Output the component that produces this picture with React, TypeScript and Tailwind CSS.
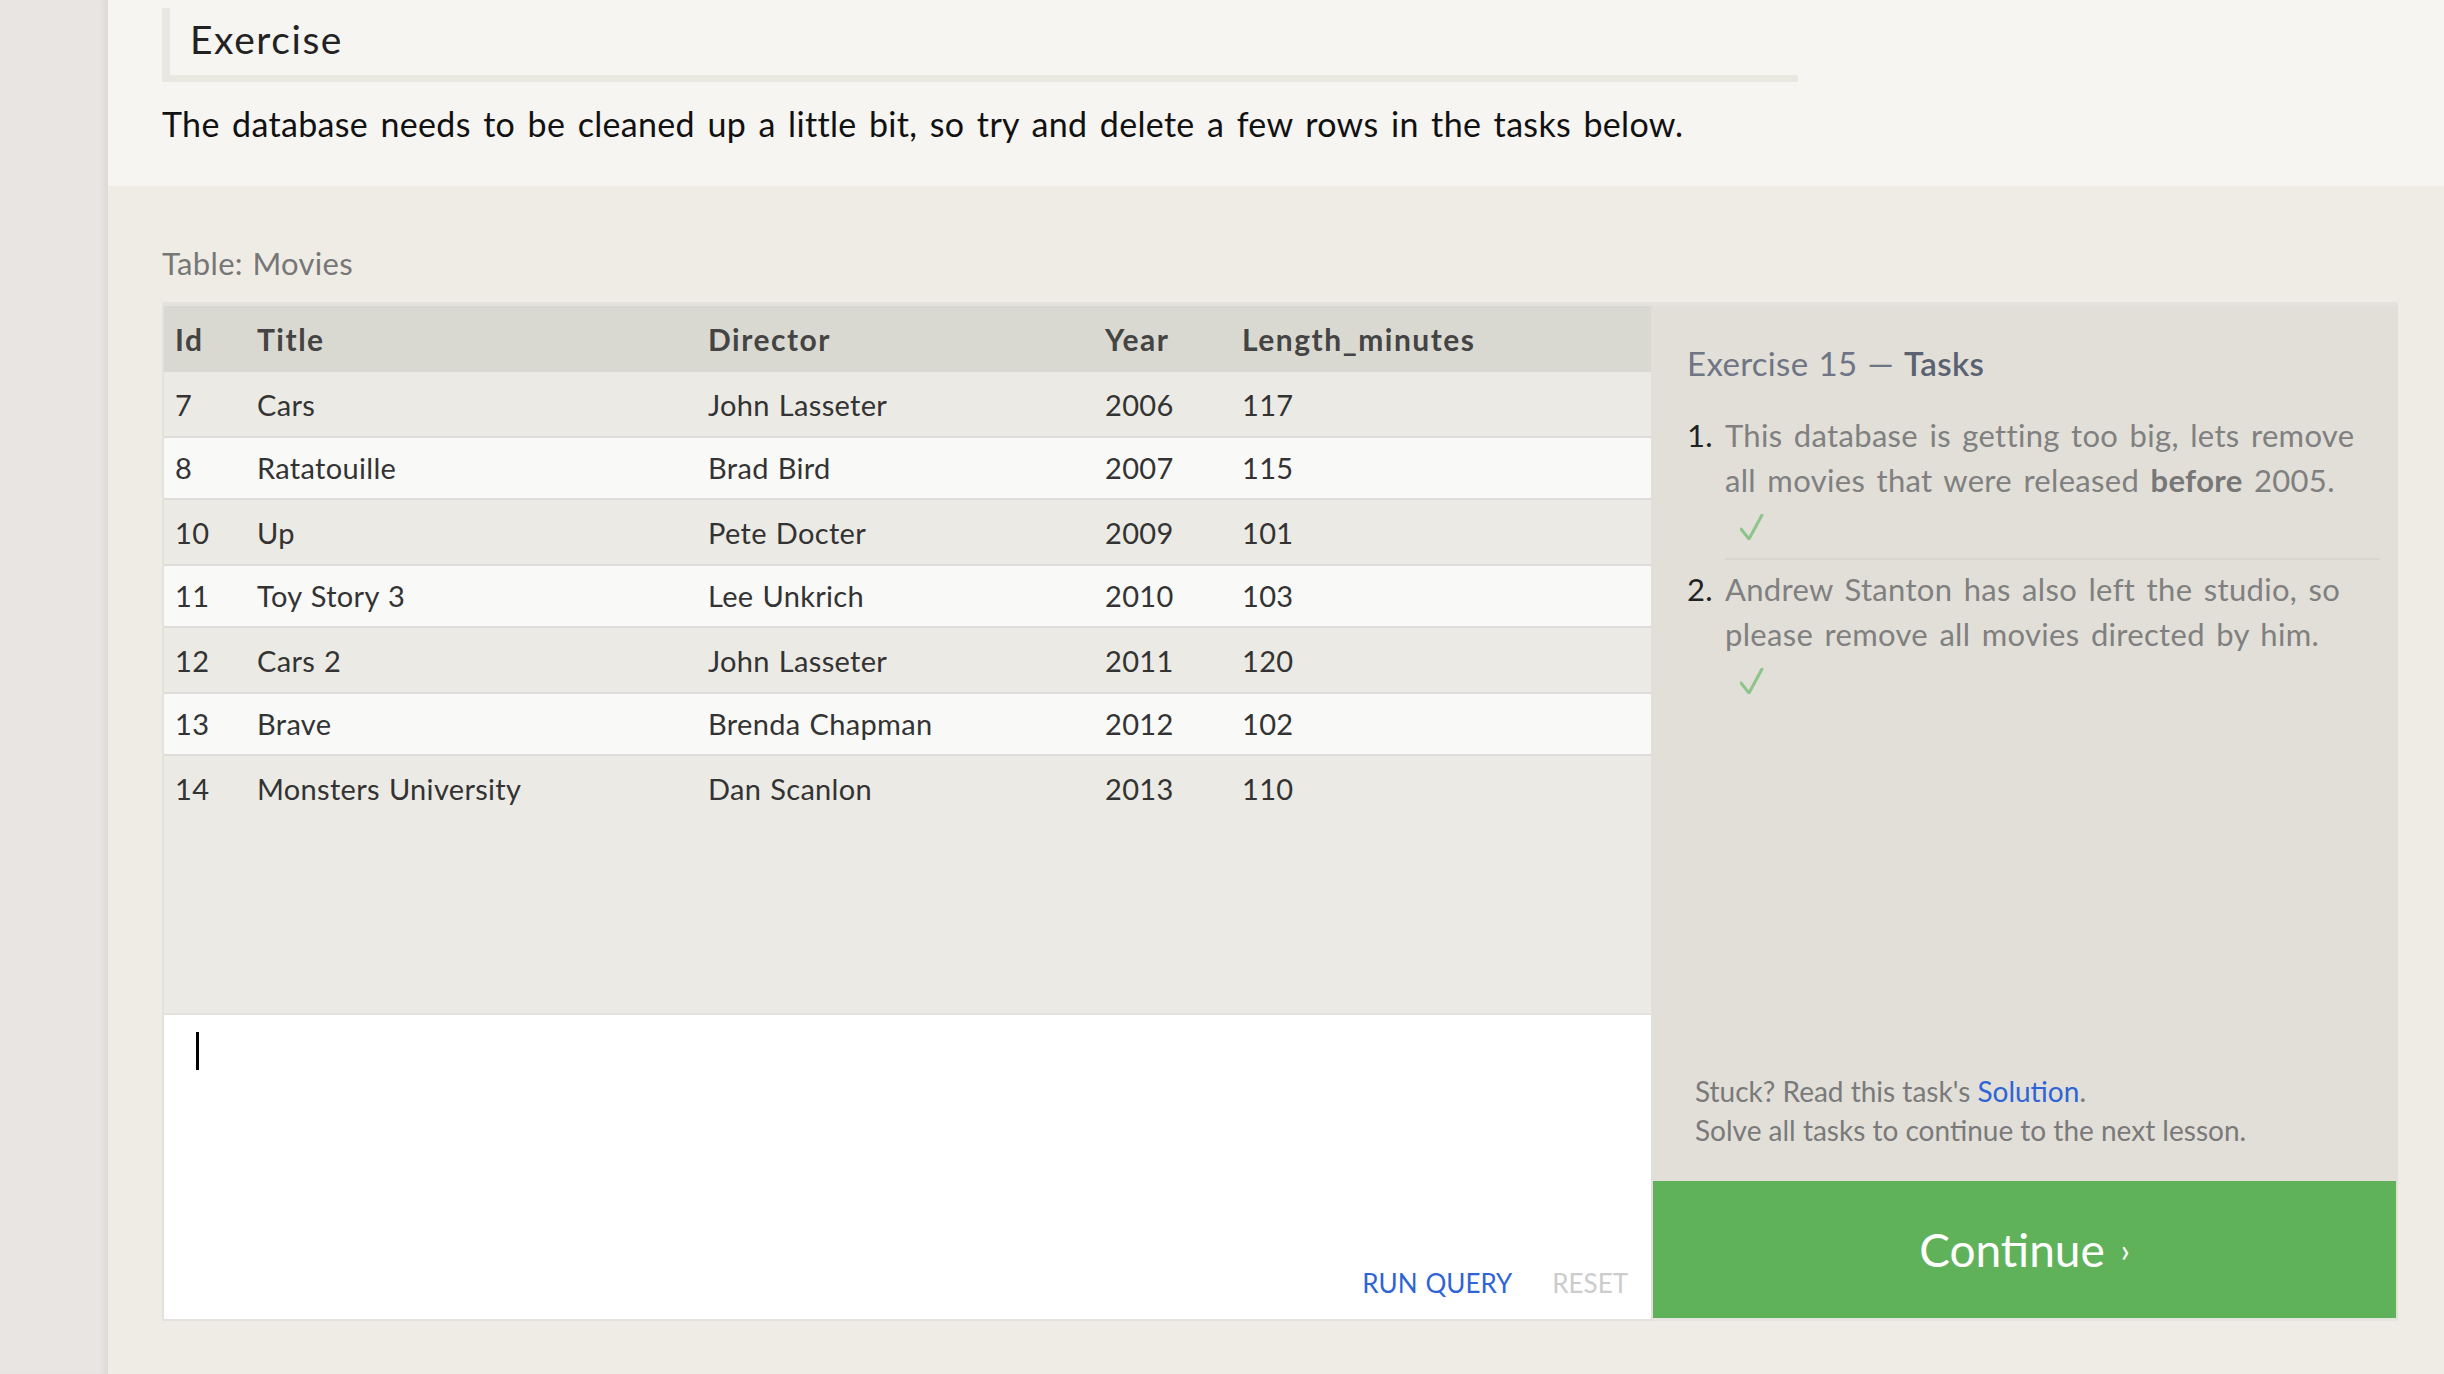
import React from "react";

const rows = [
  ["7", "Cars", "John Lasseter", "2006", "117"],
  ["8", "Ratatouille", "Brad Bird", "2007", "115"],
  ["10", "Up", "Pete Docter", "2009", "101"],
  ["11", "Toy Story 3", "Lee Unkrich", "2010", "103"],
  ["12", "Cars 2", "John Lasseter", "2011", "120"],
  ["13", "Brave", "Brenda Chapman", "2012", "102"],
  ["14", "Monsters University", "Dan Scanlon", "2013", "110"],
];

function Cells({ r }: { r: string[] }) {
  return (
    <>
      <div className="w-[93px] pl-[11px]">{r[0]}</div>
      <div className="w-[451px]">{r[1]}</div>
      <div className="w-[397px]">{r[2]}</div>
      <div className="w-[137px]">{r[3]}</div>
      <div className="flex-1">{r[4]}</div>
    </>
  );
}

function Check() {
  return (
    <div className="h-[45px] pl-[15px] pt-[11px]">
      <svg width="24" height="26" viewBox="0 0 24 26" fill="none">
        <path
          d="M1 15 L9 25 L22 1"
          stroke="#8cc58a"
          strokeWidth="3"
          strokeLinecap="round"
          strokeLinejoin="round"
        />
      </svg>
    </div>
  );
}

export default function App() {
  return (
    <div className="flex h-[1374px] w-full overflow-hidden font-['Lato',sans-serif] tracking-[0.02em] [word-spacing:0.08em]">
      <div className="w-[108px] shrink-0 bg-[#e9e5e2] shadow-[inset_-8px_0_8px_-6px_rgba(0,0,0,0.08)]" />
      <div className="flex flex-1 flex-col bg-[#efece5]">
        <div className="h-[186px] bg-[#f6f5f1] pl-[54px] pt-[8px]">
          <div className="flex h-[74px] w-[1636px] items-center border-b-[7px] border-l-[8px] border-[#e9e8e0] pb-[5px] pl-[20px] text-[39px] tracking-[0.04em] text-[#222]">
            Exercise
          </div>
          <p className="mt-[22px] text-[34px] leading-[40px] text-[#111] [word-spacing:0.1em]">
            The database needs to be cleaned up a little bit, so try and delete a few rows in the tasks below.
          </p>
        </div>

        <div className="pl-[54px] pr-[46px] pt-[57px]">
          <div className="text-[31px] leading-[40px] text-[#777]">Table: Movies</div>
          <div className="mt-[19px] flex">
            <div className="flex w-[1489px] flex-col">
              <div className="flex h-[711px] flex-col border-l-[2px] border-t-[4px] border-[#e3e2dc] bg-[#ebeae4] text-[29px] text-[#333]">
                <div className="flex h-[66px] items-center bg-[#dad9d1] text-[30px] font-bold tracking-[0.05em] text-[#444]">
                  <Cells r={["Id", "Title", "Director", "Year", "Length_minutes"]} />
                </div>
                {rows.map((r, i) => (
                  <div
                    key={r[0]}
                    className={
                      i % 2 === 0
                        ? "flex h-[64px] items-center border-t-[2px] border-[#ebeae4] bg-[#ebeae4]"
                        : "flex h-[64px] items-center border-y-[2px] border-[#dedddb] bg-[#f9f9f8]"
                    }
                  >
                    <Cells r={r} />
                  </div>
                ))}
              </div>
              <div className="relative h-[308px] border-y-[2px] border-l-[2px] border-[#e3e2dc] bg-white">
                <div className="absolute left-[32px] top-[17px] h-[38px] w-[3px] bg-black" />
                <div className="absolute bottom-[19px] right-[23px] flex gap-[40px] text-[26px] leading-[34px] tracking-normal">
                  <span className="text-[#2f64d6]">RUN QUERY</span>
                  <span className="text-[#cccccc]">RESET</span>
                </div>
              </div>
            </div>

            <div className="flex w-[747px] flex-col border-x-[2px] border-b-[3px] border-t-[4px] border-x-[#e1dfd8] border-b-[#e6e4de] border-t-[#e3e2dc] bg-[#e1dfd8]">
              <div className="flex flex-1 flex-col">
                <div className="pl-[34px] pt-[37px] text-[33px] leading-[40px] text-[#6f7584]">
                  Exercise 15 — <span className="font-semibold text-[#5a6171]">Tasks</span>
                </div>
                <ol className="mt-[30px] pl-[34px] pr-[16px] text-[31px] leading-[45px] text-[#808080] [word-spacing:0.1em]">
                  <li className="flex">
                    <span className="w-[38px] shrink-0 text-[#222]">1.</span>
                    <div className="flex-1 border-b-[2px] border-[#d8d6ce] pb-[10px]">
                      <div>This database is getting too big, lets remove</div>
                      <div>
                        all movies that were released <b className="text-[#777]">before</b> 2005.
                      </div>
                      <Check />
                    </div>
                  </li>
                  <li className="mt-[7px] flex">
                    <span className="w-[38px] shrink-0 text-[#222]">2.</span>
                    <div className="flex-1">
                      Andrew Stanton has also left the studio, so please remove all movies directed by him.
                      <Check />
                    </div>
                  </li>
                </ol>
                <div className="mt-auto pb-[31px] pl-[42px] text-[28px] leading-[39px] tracking-normal text-[#7a7a7a] [word-spacing:normal]">
                  <div>
                    Stuck? Read this task's <span className="text-[#2f64d6]">Solution</span>.
                  </div>
                  <div>Solve all tasks to continue to the next lesson.</div>
                </div>
              </div>
              <div className="flex h-[137px] items-center justify-center bg-[#60b25a] text-[46px] tracking-normal text-white [word-spacing:normal]">
                Continue <span className="ml-[16px] text-[32px]">›</span>
              </div>
            </div>
          </div>
        </div>
      </div>
    </div>
  );
}
